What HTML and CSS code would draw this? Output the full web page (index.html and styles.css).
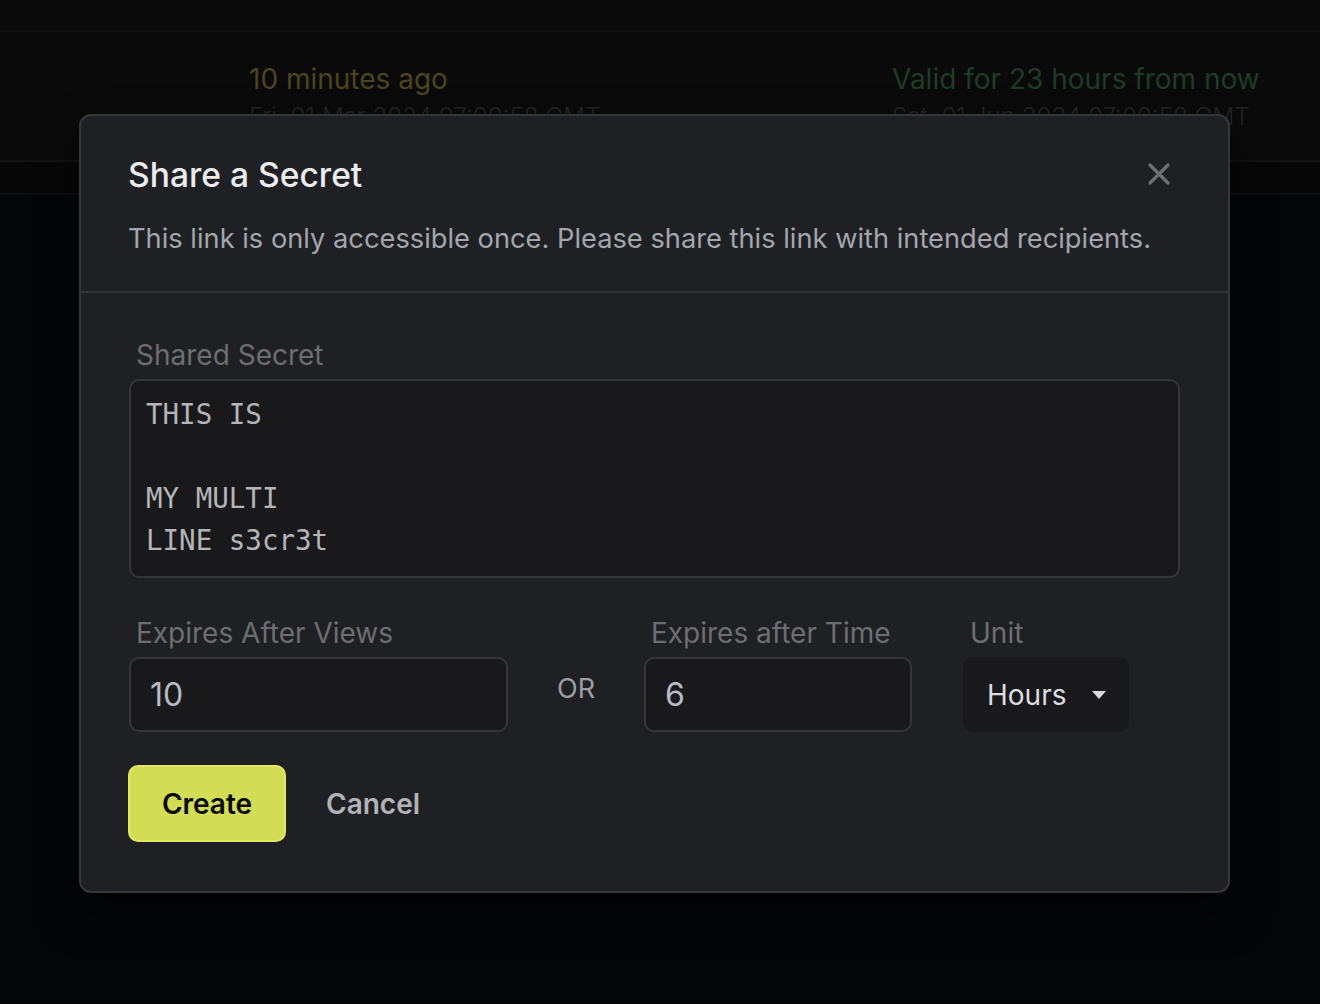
FILE: index.html
```html
<!DOCTYPE html>
<html lang="en">
<head>
<meta charset="utf-8">
<title>Share a Secret</title>
<link rel="stylesheet" href="styles.css">
</head>
<body>
<div class="page">
  <div class="topbar"></div>
  <div class="row">
    <div class="cell cell-created">
      <div class="rel created">10 minutes ago</div>
      <div class="abs">Fri, 01 Mar 2024 07:00:58 GMT</div>
    </div>
    <div class="cell cell-valid">
      <div class="rel valid">Valid for 23 hours from now</div>
      <div class="abs">Sat, 01 Jun 2024 07:00:58 GMT</div>
    </div>
  </div>
  <div class="row2"></div>
</div>

<div class="modal">
  <div class="modal-header">
    <div class="title-row">
      <h2 class="title">Share a Secret</h2>
      <button class="close" aria-label="Close">
        <svg width="24" height="24" viewBox="0 0 24 24"><path d="M3 3 L21 21 M21 3 L3 21" stroke="#6e6f73" stroke-width="3.2" stroke-linecap="round"/></svg>
      </button>
    </div>
    <p class="desc">This link is only accessible once. Please share this link with intended recipients.</p>
  </div>
  <div class="modal-body">
    <label class="label">Shared Secret</label>
    <div class="textarea">THIS IS

MY MULTI
LINE s3cr3t</div>
    <div class="fields">
      <div class="field f-views">
        <label class="label">Expires After Views</label>
        <div class="input">10</div>
      </div>
      <div class="or">OR</div>
      <div class="field f-time">
        <label class="label">Expires after Time</label>
        <div class="input">6</div>
      </div>
      <div class="field f-unit">
        <label class="label">Unit</label>
        <div class="select">
          <span>Hours</span>
          <svg width="16" height="10" viewBox="0 0 16 10"><path d="M1 1 L15 1 L8 9 Z" fill="#d8d9dc"/></svg>
        </div>
      </div>
    </div>
    <div class="actions">
      <button class="btn-create">Create</button>
      <button class="btn-cancel">Cancel</button>
    </div>
  </div>
</div>
</body>
</html>
```
FILE: styles.css
```css
* { box-sizing: border-box; }
html, body { margin: 0; padding: 0; }
body {
  width: 1320px;
  height: 1004px;
  background: #050608;
  font-family: Inter, "Noto Sans", sans-serif;
  overflow: hidden;
  position: relative;
}
.topbar {
  height: 32px;
  background: #0a0a0b;
  border-bottom: 2px solid #111214;
}
.row {
  height: 130px;
  background: #0a0a0b;
  border-bottom: 2px solid #111214;
  display: flex;
  padding-top: 30px;
}
.row2 {
  height: 33px;
  background: #070708;
  border-bottom: 2px solid #0e0f11;
}
.cell { white-space: nowrap; }
.cell-created { margin-left: 249px; width: 643px; }
.rel { font-size: 28px; line-height: 34px; }
.created { color: #4d4420; }
.valid { color: #1e3c23; }
.abs { font-size: 24.2px; color: #242426; margin-top: 6px; font-weight: 300; }

.modal {
  position: absolute;
  left: 79px;
  top: 114px;
  width: 1151px;
  height: 779px;
  background: #1f2024;
  border: 2px solid #35363a;
  border-radius: 12px;
  box-shadow: 0 20px 40px rgba(0,0,0,0.5);
}
.modal-header {
  padding: 38px 48px 0 47px;
  height: 177px;
  border-bottom: 2px solid #33343a;
}
.title-row { display: flex; justify-content: space-between; align-items: center; }
.title {
  margin: 0;
  font-size: 33.6px;
  font-weight: 500;
  color: #ececee;
  line-height: 42px;
}
.close {
  background: none; border: 0; padding: 0; margin-right: 9px; margin-top: -2px;
  width: 24px; height: 24px; display: flex;
}
.desc {
  margin: 26px 0 0;
  font-size: 27.25px;
  color: #a3a6ad;
  line-height: 34px;
}
.modal-body { padding: 44px 48px 48px 48px; }
.label {
  display: block;
  padding-left: 7px;
  font-size: 28px;
  color: #6d6e72;
  line-height: 36px;
  margin-bottom: 6px;
}
.textarea {
  white-space: pre;
  font-family: "DejaVu Sans Mono", "Liberation Mono", monospace;
  font-size: 27.5px;
  line-height: 42px;
  color: #b4b5b8;
  background: #19191c;
  border: 2px solid #35363a;
  border-radius: 10px;
  height: 199px;
  padding: 12px 15px;
}
.fields {
  display: flex;
  align-items: flex-end;
  margin-top: 37px;
}
.f-views { width: 379px; }
.or {
  width: 136px;
  display: flex;
  align-items: center;
  justify-content: center;
  font-size: 27px;
  color: #9c9ea5;
  height: 74px;
  padding-bottom: 14px;
}
.f-time { width: 268px; }
.f-unit { width: 166px; margin-left: 51px; }
.input {
  height: 75px;
  background: #19191c;
  border: 2px solid #35363a;
  border-radius: 10px;
  font-size: 32px;
  color: #b8bbc3;
  display: flex;
  align-items: center;
  padding-left: 19px;
}
.select {
  height: 75px;
  background: #19191c;
  border-radius: 10px;
  display: flex;
  align-items: center;
  justify-content: space-between;
  padding: 0 22px 0 24px;
  font-size: 28px;
  color: #dcdde0;
}
.actions {
  display: flex;
  align-items: center;
  margin-top: 33px;
}
.btn-create {
  width: 158px;
  height: 77px;
  background: #d3dc55;
  border: 2px solid #e1e960;
  border-radius: 10px;
  font-family: Inter, sans-serif;
  font-size: 28px;
  font-weight: 600;
  color: #0a0a0a;
  margin-left: -1px;
}
.btn-cancel {
  margin-left: 40px;
  background: none;
  border: 0;
  padding: 0;
  font-family: Inter, sans-serif;
  font-size: 28px;
  font-weight: 600;
  color: #b1b3b8;
}
```
